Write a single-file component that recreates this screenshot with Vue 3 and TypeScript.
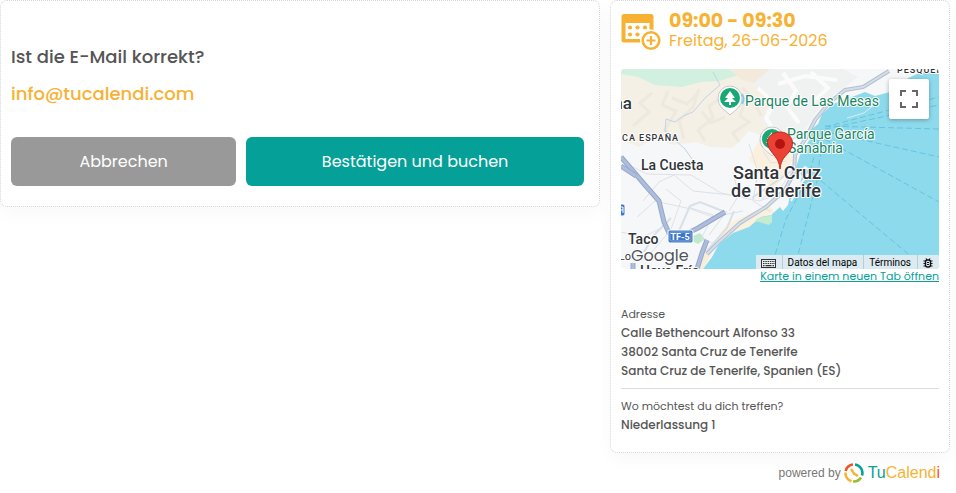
<script setup lang="ts">
interface Detail {
  label: string
  lines: string[]
}

const email = 'info@tucalendi.com'

const details: Detail[] = [
  {
    label: 'Adresse',
    lines: [
      'Calle Bethencourt Alfonso 33',
      '38002 Santa Cruz de Tenerife',
      'Santa Cruz de Tenerife, Spanien (ES)',
    ],
  },
  { label: 'Wo möchtest du dich treffen?', lines: ['Niederlassung 1'] },
]

const ferryRoutes: string[] = [
  'M204 58L318 28',
  'M204 60L318 36',
  'M204 57L318 60',
  'M202 62L318 88',
  'M196 66L318 133',
  'M193 106L292 189',
  'M200 62L188 106L165 150L154 186',
  'M202 64L196 112L177 186',
]

const minorStreets: string[] = [
  'M0 92L26 105L70 106L100 124L138 132L168 122',
  'M16 148L34 132L70 140L92 148L122 142',
  'M45 120L60 132L50 160L32 182L10 190',
  'M67 138L92 146L80 170L94 175',
  'M106 142L88 166',
  'M22 132L38 113L53 106L72 122L110 126',
  'M0 163L22 168L38 160',
  'M112 104L118 126L108 142',
  'M128 75L137 103L132 132L150 143',
  'M142 82L150 94L166 92',
  'M139 71L160 75L176 68',
  'M175 98L160 118L140 130',
]
</script>

<template>
  <main class="booking">
    <section class="card confirm">
      <h1 class="question">Ist die E-Mail korrekt?</h1>
      <p class="email">{{ email }}</p>
      <div class="actions">
        <button type="button" class="btn cancel">Abbrechen</button>
        <button type="button" class="btn accept">Bestätigen und buchen</button>
      </div>
    </section>

    <aside class="side">
      <div class="card summary">
        <header class="slot">
          <svg class="slot-icon" viewBox="0 0 40 38" aria-hidden="true">
            <path d="M3 1H30Q32.500 1 32.500 3.500V17H28.500V10H4.500V26H20V29.500H3Q.500 29.500 .500 27V3.500Q.500 1 3 1Z" fill="#f7b234" />
            <g fill="#f7b234">
              <circle cx="9" cy="14.500" r="2.100" /><circle cx="16.500" cy="14.500" r="2.100" /><circle cx="24" cy="14.500" r="2.100" />
              <circle cx="9" cy="21.500" r="2.100" /><circle cx="16.500" cy="21.500" r="2.100" />
            </g>
            <circle cx="30" cy="27.500" r="11" fill="#fff" />
            <circle cx="30" cy="27.500" r="8.300" fill="none" stroke="#f7b234" stroke-width="2.600" />
            <path d="M30 23v9M25.500 27.500h9" stroke="#f7b234" stroke-width="2.200" />
          </svg>
          <div>
            <p class="time">09:00 - 09:30</p>
            <p class="date">Freitag, 26-06-2026</p>
          </div>
        </header>

        <div class="map">
          <svg class="map-canvas" viewBox="0 0 318 200" preserveAspectRatio="xMidYMid slice" role="img" aria-label="Santa Cruz de Tenerife">
            <rect width="318" height="200" fill="#f6f7f8" />
            <path d="M0 0H135L145 14L154 28L145 42L151 55L139 66L128 62L112 79L89 78L75 73L52 76L36 69L18 78L0 70Z" fill="#f5f0e5" />
            <path d="M110 0H222L237 8L222 20L207 30L193 47L182 64L166 75L142 52L151 28L134 17Z" fill="#f0f2f1" />
            <path d="M0 0H138L128 4L117 6L99 12L80 13L61 18L34 16L17 8L0 5Z" fill="#d2f0df" />
            <path d="M108 0H149L133 14L121 11Z" fill="#f4eadb" />
            <g fill="none" stroke="#e9e4d8" stroke-width="3" opacity=".5">
              <path d="M31 24L19 34L28 43L12 57M47 22L41 36L55 42L44 61L53 69M78 20L72 38L58 52L63 70M101 28L88 37L92 49L77 61L84 72M125 29L119 47L128 53L112 64L118 73" />
              <path d="M51 29L66 35L76 25M81 43L90 54L104 48M121 19L132 29L140 47" />
            </g>
            <g fill="none" stroke="#fff" stroke-width="4" opacity=".7">
              <path d="M137 19L153 34L145 49L154 63M162 4L175 22L166 38L178 54M190 3L207 19L193 32M157 15L184 7L216 11" />
            </g>
            <path d="M139 69L166 73L172 91L162 110L150 120L141 104L128 90Z" fill="#fbf0dd" />
            <path d="M132 143L149 137L154 143L142 148L127 159L112 164L102 172L96 168L107 155Z" fill="#fbf0dd" />
            <path d="M82 182L92 182L82 200H76Z" fill="#f8edd9" />
            <path d="M72 167L79 164L84 170L77 175L71 172Z" fill="#bfe9cd" />

            <g fill="none" stroke="#dce2e9" stroke-width="1">
              <path v-for="street in minorStreets" :key="street" :d="street" />
            </g>
            <g fill="none" stroke="#d8e0e8" stroke-width="2">
              <path d="M54 171L69 137L79 133L104 143M50 149L33 166L23 183M113 142L106 159L85 183M131 129L166 105L178 97" />
              <path d="M92 3L99 16L84 29L72 43L62 47L54 53L45 50L44 62L64 80L80 103" stroke-width="1" stroke="#c3d2e4" />
            </g>
            <g fill="none" stroke-linejoin="round">
              <path d="M86 185L98 173L119 154L145 138L164 121L173 104L174 86L185 69L194 51L208 34L224 21L242 18L268 2" stroke="#b4c0cf" stroke-width="4" />
              <path d="M86 185L98 173L119 154L145 138L164 121L173 104L174 86L185 69L194 51L208 34L224 21L242 18L268 2" stroke="#d5dde8" stroke-width="2" />
              <path d="M0 88L24 116L38 132L43 153L48 164L59 168L77 159L104 143" stroke="#95a8c9" stroke-width="5" />
              <path d="M0 88L24 116L38 132L43 153L48 164L59 168L77 159L104 143" stroke="#aebddb" stroke-width="3" />
              <path d="M76 200L81 184L86 171M0 97L15 107M12 200V194" stroke="#95a8c9" stroke-width="5" />
              <path d="M76 200L81 184L86 171M0 97L15 107M12 200V194" stroke="#aebddb" stroke-width="3" />
            </g>

            <path d="M318 2L298 4L281 12L269 23L254 27L244 23L231 28L212 35L201 45L197 55L191 60L189 70L179 86L175 98L181 107L178 118L169 126L167 136L162 142L159 138L150 146L140 148L128 158L112 164L98 175L91 188L82 200H318Z" fill="#8edaed" />
            <path d="M226 49L243 44L254 35" fill="none" stroke="#d6edf3" />
            <path d="M137 149L151 146V153L148 156L134 152Z" fill="#c5ebd0" />
            <path d="M173 110L184 98L190 102L177 118M170 132L177 120" fill="none" stroke="#f2f4f5" stroke-width="2" />
            <g fill="none" stroke="#63c4df" stroke-dasharray="6 3">
              <path v-for="route in ferryRoutes" :key="route" :d="route" />
            </g>

            <g class="place dark">
              <text x="11" y="40" class="town">na</text>
              <text x="276" y="4" class="district">PESQUER.</text>
              <text x="1" y="72" class="district">CA ESPAÑA</text>
              <text x="20" y="101" class="suburb">La Cuesta</text>
              <text x="112" y="110" class="city">Santa Cruz</text>
              <text x="110" y="128" class="city">de Tenerife</text>
              <text x="7" y="175" class="suburb">Taco</text>
              <text x="10" y="191" class="small">Lo</text>
              <text x="19" y="207" class="suburb">Hoya Fría</text>
            </g>
            <g class="place green">
              <text x="124" y="37">Parque de Las Mesas</text>
              <text x="166" y="70">Parque García</text>
              <text x="167" y="84">Sanabria</text>
            </g>

            <g>
              <path d="M109 46C104 41 97 38 97 29A12 12 0 0 1 121 29C121 38 114 41 109 46Z" fill="#fff" stroke="#c5c9ca" />
              <circle cx="109" cy="29" r="10" fill="#19a873" />
              <path d="M109 22L104 29H107L103 33H108V36H110V33H115L111 29H114Z" fill="#fff" />
            </g>
            <path d="M121 25Q124 30 121 35" fill="none" stroke="#88caf0" stroke-width="2" />
            <path d="M151 87C146 82 139 79 139 70A12 12 0 0 1 163 70C163 79 156 82 151 87Z" fill="#fff" stroke="#c5c9ca" />
            <circle cx="151" cy="70" r="10" fill="#19a873" />
            <path d="M151 63L146 70H149L145 74H151Z" fill="#fff" />
            <path d="M159 100C158 90 154 88 150 82C142 72 149 63 159 63S176 73 168 83C164 88 160 90 159 100Z" fill="#ea4335" stroke="#c5221f" />
            <circle cx="159" cy="75" r="5" fill="#b31412" />

            <rect x="47" y="161" width="25" height="13" rx="2" fill="#3b76c8" stroke="#fff" />
            <rect x="49" y="163" width="21" height="9" rx="1" fill="none" stroke="#82a8dd" />
            <text x="59" y="171" class="road">TF-5</text>
            <rect x="-7" y="135" width="11" height="12" rx="2" fill="#3b76c8" stroke="#fff" />
            <path d="M0 138H2V144M0 141H2" fill="none" stroke="#fff" />
            <text x="10" y="192" class="brand">Google</text>
          </svg>

          <button type="button" class="fullscreen" aria-label="Vollbild">
            <svg viewBox="0 0 18 18" aria-hidden="true">
              <path d="M1 6V1H6M12 1H17V6M17 12V17H12M6 17H1V12" fill="none" stroke="#666" stroke-width="2" />
            </svg>
          </button>

          <div class="map-bar">
            <button type="button" class="bar-item" aria-label="Tastaturkürzel">
              <svg class="keyboard" viewBox="0 0 15 9" aria-hidden="true">
                <rect x=".500" y=".500" width="14" height="8" fill="#e8eef0" stroke="#333" />
                <path d="M2 2.500H14M2 4.500H14" stroke="#333" stroke-width="1.200" stroke-dasharray="1.500 .800" />
                <path d="M2 6.700H3.500M4.500 6.700H10.500M11.500 6.700H13" stroke="#333" stroke-width="1.200" />
              </svg>
            </button>
            <button type="button" class="bar-item">Datos del mapa</button>
            <a class="bar-item" href="#">Términos</a>
            <button type="button" class="bar-item" aria-label="Fehler melden">
              <svg class="bug" viewBox="0 0 10 10" aria-hidden="true">
                <rect x="2.500" y="2" width="5" height="7" rx="2" fill="none" stroke="#111" stroke-width="1.400" />
                <path d="M3 .500L4 2M7 .500L6 2M.500 3H2.500M.500 5.500H2.500M.500 8H2.500M7.500 3H9.500M7.500 5.500H9.500M7.500 8H9.500M4 4.500H6M4 6.500H6" stroke="#111" stroke-width="1.200" />
              </svg>
            </button>
          </div>
        </div>
        <a class="map-link" href="#">Karte in einem neuen Tab öffnen</a>

        <dl class="details">
          <div v-for="detail in details" :key="detail.label" class="detail">
            <dt>{{ detail.label }}</dt>
            <dd v-for="line in detail.lines" :key="line">{{ line }}</dd>
          </div>
        </dl>
      </div>

      <footer class="powered">
        <span>powered by</span>
        <a class="logo" href="#">
          <svg viewBox="0 0 20 20" aria-hidden="true">
            <g fill="none" stroke-width="2.600">
              <path d="M1.700 8A8.500 8.500 0 0 1 9 1.500" stroke="#ee5424" />
              <path d="M11 1.500A8.500 8.500 0 0 1 18 12.500" stroke="#05a097" />
              <path d="M17 14.500A8.500 8.500 0 0 1 9 18.500" stroke="#97bf2b" />
              <path d="M7.500 18.200A8.500 8.500 0 0 1 1.500 9.500" stroke="#f7b234" />
            </g>
            <path d="M7 6L10 10.500L14 13" fill="none" stroke="#f7b234" stroke-width="2.400" />
          </svg>
          <span class="word"><span class="tu">Tu</span><span class="calend">Calend</span><span class="dot">i</span></span>
        </a>
      </footer>
    </aside>
  </main>
</template>

<style>
body {
  background: #fff;
}
</style>

<style scoped>
.booking {
  display: grid;
  grid-template-columns: 600fr 340fr;
  gap: 10px;
  align-items: start;
  padding-right: 6px;
  color: #555;
  font-family: Poppins, Inter, sans-serif;
}

.booking * {
  box-sizing: border-box;
}

p,
h1,
dl,
dd {
  margin: 0;
}

button {
  border: 0;
  font-family: inherit;
  cursor: pointer;
}

.card {
  border: 1px dotted #d5d5d5;
  border-radius: 7px;
  background: #fff;
  box-shadow: 0 6px 18px rgba(0, 0, 0, 0.03);
}

.confirm {
  padding: 42px 15px 20px 10px;
}

.question,
.email {
  font-size: 18px;
  font-weight: 500;
  line-height: 27px;
}

.email {
  margin-top: 10px;
  color: #f7b234;
}

.actions {
  display: grid;
  grid-template-columns: 2fr 3fr;
  gap: 10px;
  margin-top: 30px;
}

.btn {
  height: 49px;
  border-radius: 6px;
  color: #fff;
  font-size: 16px;
}

.cancel {
  background: #999;
}

.accept {
  background: #05a097;
}

.summary {
  padding: 10px 10px 18px;
}

.slot {
  display: flex;
  gap: 8px;
  height: 58px;
  color: #f7b234;
}

.slot-icon {
  width: 40px;
  height: 38px;
  margin-top: 2px;
}

.time {
  font-size: 19px;
  font-weight: 700;
  line-height: 20px;
}

.date {
  font-size: 16px;
  line-height: 19px;
}

.map {
  position: relative;
  height: 200px;
  overflow: hidden;
  border-radius: 4px;
}

.map-canvas {
  display: block;
  width: 100%;
  height: 100%;
  font-family: Roboto, sans-serif;
}

.place {
  paint-order: stroke;
  stroke: #fff;
  stroke-width: 2px;
  stroke-linejoin: round;
}

.dark {
  fill: #303439;
}

.green {
  fill: #188563;
  font-size: 14px;
}

.town {
  font-size: 17px;
  font-weight: 500;
  text-anchor: end;
}

.district {
  font-size: 9px;
  font-weight: 500;
  letter-spacing: 1px;
}

.suburb {
  font-size: 14px;
  font-weight: 500;
}

.city {
  font-size: 18px;
  font-weight: 500;
}

.small {
  font-size: 11px;
  text-anchor: end;
}

.road {
  fill: #fff;
  font-size: 9px;
  font-weight: 700;
  text-anchor: middle;
}

.brand {
  paint-order: stroke;
  fill: #505459;
  stroke: #fff;
  stroke-width: 2px;
  font-family: Poppins, Lato, sans-serif;
  font-size: 16px;
}

.fullscreen {
  position: absolute;
  top: 10px;
  right: 10px;
  display: grid;
  place-items: center;
  width: 40px;
  height: 40px;
  padding: 0;
  border-radius: 2px;
  background: #fff;
  box-shadow: 0 1px 4px rgba(0, 0, 0, 0.3);
}

.fullscreen svg {
  width: 18px;
  height: 18px;
}

.map-bar {
  position: absolute;
  right: 0;
  bottom: 0;
  display: flex;
  height: 14px;
  background: rgba(232, 238, 241, 0.87);
}

.bar-item {
  display: flex;
  align-items: center;
  padding: 2px 6px 0 5px;
  background: transparent;
  color: #000;
  font-family: Roboto, sans-serif;
  font-size: 10px;
  line-height: 12px;
  text-decoration: none;
}

.bar-item + .bar-item {
  border-left: 1px solid #b9cdd4;
}

.keyboard {
  width: 15px;
  height: 9px;
}

.bug {
  width: 10px;
  height: 10px;
}

.map-link {
  display: block;
  color: #05a097;
  font-size: 11px;
  line-height: 14px;
  text-align: right;
}

.details {
  margin-top: 22px;
}

.detail {
  padding: 0 0 8px;
}

.detail + .detail {
  padding: 8px 0 0;
  border-top: 1px solid #ddd;
}

dt {
  font-size: 11px;
  line-height: 18px;
}

dd {
  font-size: 12px;
  font-weight: 500;
  line-height: 19px;
}

.powered {
  display: flex;
  justify-content: flex-end;
  align-items: center;
  gap: 3px;
  padding: 10px 10px 0 0;
  color: #777;
  font-family: "Liberation Sans", Arial, sans-serif;
  font-size: 12px;
}

.logo {
  display: flex;
  align-items: center;
  gap: 4px;
  font-size: 16px;
  line-height: 20px;
  text-decoration: none;
}

.logo svg {
  width: 20px;
  height: 20px;
}

.tu {
  color: #05a097;
}

.calend {
  color: #f7b234;
}

.dot {
  color: #ee5424;
}
</style>
